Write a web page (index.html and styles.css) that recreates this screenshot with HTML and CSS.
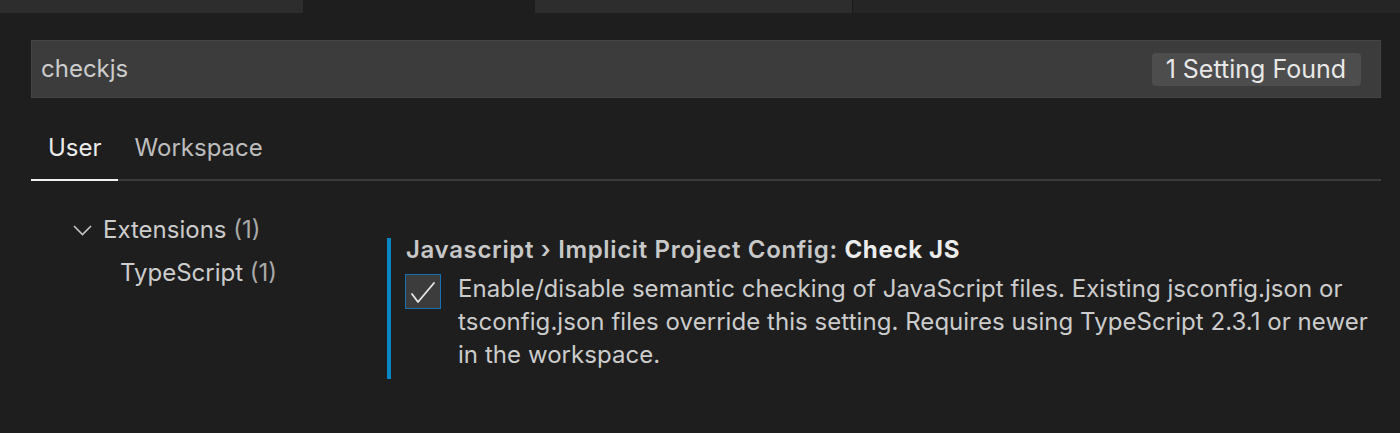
FILE: index.html
```html
<!DOCTYPE html>
<html lang="en">
<head>
<meta charset="utf-8">
<title>Settings</title>
<link rel="stylesheet" href="styles.css">
</head>
<body>
<div class="tabstrip">
  <div class="etab etab-a"></div>
  <div class="etab etab-active"></div>
  <div class="etab etab-b"></div>
  <div class="etab-fill"></div>
</div>
<main class="settings">
  <div class="search">
    <span class="query">checkjs</span>
    <span class="badge">1 Setting Found</span>
  </div>
  <nav class="scopes">
    <span class="scope active">User</span>
    <span class="scope">Workspace</span>
  </nav>
  <div class="body">
    <ul class="tree">
      <li class="tree-row">
        <svg class="chev" width="19" height="11" viewBox="0 0 19 11"><polyline points="1,1 9.5,9.5 18,1" fill="none" stroke="#c5c5c5" stroke-width="1.6"/></svg>
        <span>Extensions <span class="count">(1)</span></span>
      </li>
      <li class="tree-row child">TypeScript <span class="count">(1)</span></li>
    </ul>
    <section class="setting">
      <h2 class="title">Javascript › Implicit Project Config: <strong>Check JS</strong></h2>
      <div class="value">
        <span class="checkbox">
          <svg width="34" height="33" viewBox="0 0 34 33"><polyline points="6,19 12,27 28,8" fill="none" stroke="#e8e8e8" stroke-width="1.8" stroke-linecap="round" stroke-linejoin="round"/></svg>
        </span>
        <p class="desc">Enable/disable semantic checking of JavaScript files. Existing jsconfig.json or tsconfig.json files override this setting. Requires using TypeScript 2.3.1 or newer in the workspace.</p>
      </div>
    </section>
  </div>
</main>
</body>
</html>
```
FILE: styles.css
```css
* { box-sizing: border-box; }
html, body {
  margin: 0;
  padding: 0;
  background: #1e1e1e;
  height: 100%;
  overflow: hidden;
}
body {
  font-family: Inter, "Noto Sans", sans-serif;
  color: #cccccc;
}
.tabstrip {
  display: flex;
  height: 13px;
}
.etab-a { width: 303px; background: #2d2d2d; }
.etab-active { width: 232px; background: #1e1e1e; }
.etab-b { width: 318px; background: #2d2d2d; border-right: 1px solid #1b1b1b; }
.etab-fill { flex: 1; background: #252526; }

.settings {
  padding: 0 19px 0 31px;
}
.search {
  margin-top: 27px;
  height: 58px;
  background: #3c3c3c;
  border: 1px solid #444444;
  display: flex;
  align-items: center;
  justify-content: space-between;
  padding: 0 19px 0 9px;
}
.query {
  font-size: 24px;
  line-height: 56px;
  color: #cccccc;
}
.badge {
  background: #4d4d4d;
  color: #e8e8e8;
  font-size: 25px;
  line-height: 33px;
  height: 33px;
  padding: 0 15px 0 14px;
  border-radius: 4px;
}
.scopes {
  margin-top: 34px;
  display: flex;
  border-bottom: 2px solid #3b3b3b;
}
.scope {
  font-size: 24px;
  line-height: 32px;
  padding: 0 16px 15px 17px;
  color: #bdbdbd;
}
.scope.active {
  color: #ececec;
  border-bottom: 2px solid #f0f0f0;
  margin-bottom: -2px;
}
.body {
  display: flex;
  align-items: flex-start;
}
.tree {
  list-style: none;
  margin: 0;
  padding: 27px 0 0 42px;
  width: 356px;
  flex: none;
}
.tree-row {
  display: flex;
  align-items: center;
  gap: 11px;
  font-size: 24px;
  line-height: 43px;
  color: #cccccc;
}
.tree-row.child {
  padding-left: 47px;
  display: block;
}
.count { color: #a9a9a9; }
.chev { flex: none; margin-top: 2px; }

.setting {
  flex: 1;
  margin-top: 57px;
  border-left: 4px solid #0a86c2;
  padding: 0 0 8px 14px;
}
.title {
  margin: 0;
  font-size: 24px;
  line-height: 24px;
  font-weight: 600;
  letter-spacing: 0.65px;
  color: #c8c8c8;
  padding-left: 1px;
}
.title strong {
  color: #ececec;
  font-weight: 700;
}
.value {
  margin-top: 10px;
  display: flex;
  align-items: flex-start;
  gap: 17px;
}
.checkbox {
  flex: none;
  width: 36px;
  height: 35px;
  margin-top: 2px;
  background: #3c3c3c;
  border: 1px solid #1670b5;
  display: flex;
  align-items: center;
  justify-content: center;
}
.desc {
  margin: 0;
  font-size: 24px;
  line-height: 33px;
  letter-spacing: 0.05px;
  color: #cccccc;
}
```
